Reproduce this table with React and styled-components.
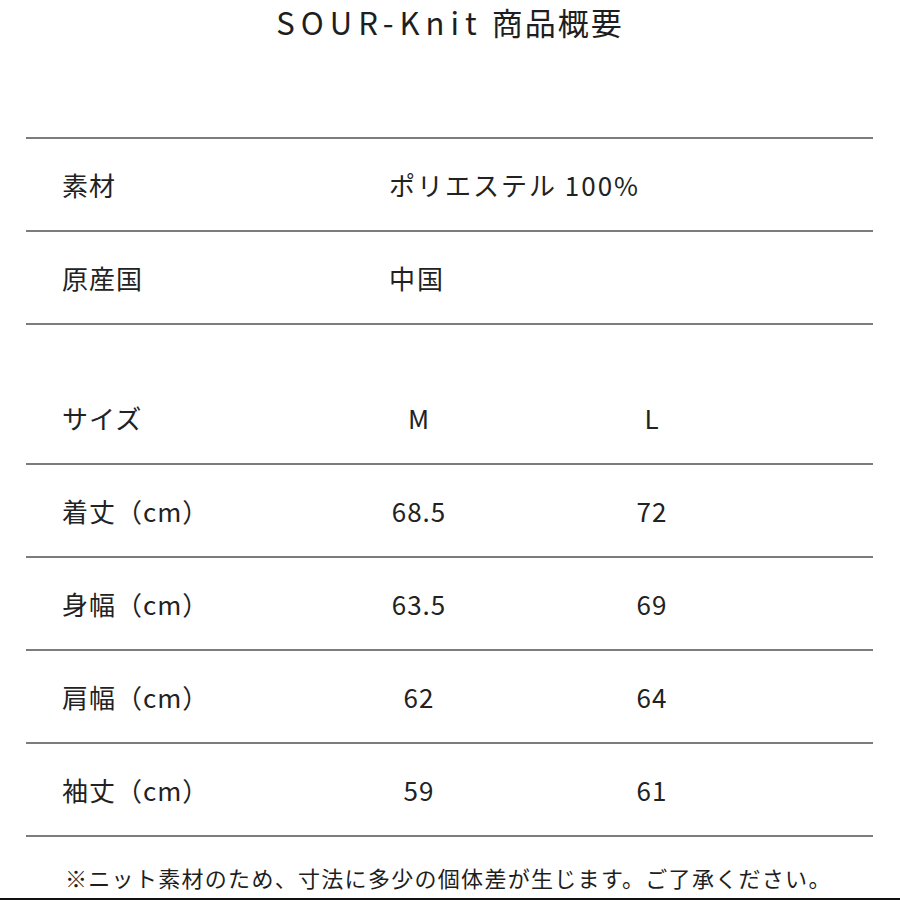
import React from 'react';
import styled, { createGlobalStyle } from 'styled-components';

const GlobalStyle = createGlobalStyle`
  html, body {
    margin: 0;
    padding: 0;
    background: #fff;
  }
  body {
    font-family: "Noto Sans CJK JP", "Noto Sans", sans-serif;
    color: #222;
  }
`

const Page = styled.div`
  width: 900px;
  height: 900px;
  display: flex;
  flex-direction: column;
  background: #fff;
`

const Title = styled.h1`
  box-sizing: border-box;
  margin: 0;
  height: 137px;
  font-size: 31px;
  font-weight: 400;
  line-height: 44px;
  text-align: center;
  letter-spacing: 2px;
  color: #1e1e1e;
`

const TitleLatin = styled.span`
  letter-spacing: 6px;
`

const Table = styled.div`
  margin: 0 27px 0 26px;
  border-top: 2px solid #7c7c7c;
`

const Row = styled.div`
  box-sizing: border-box;
  height: ${(p) => (p.$tall ? '140px' : '93px')};
  padding-top: ${(p) => (p.$tall ? '47px' : '0')};
  border-bottom: 2px solid #7c7c7c;
  display: grid;
  grid-template-columns: 363px 60px 173px 60px 1fr;
  align-items: center;
  font-size: 26px;
  letter-spacing: 1px;
`

const Label = styled.div`
  padding-left: 36px;
`

const Cell = styled.div`
  text-align: center;
  white-space: nowrap;
  justify-self: center;
`

const Wide = styled.div`
  grid-column: 2 / -1;
  letter-spacing: 2px;
`

const Note = styled.p`
  flex: 1;
  margin: 0;
  padding: 28px 0 0 65px;
  font-size: 22px;
  line-height: 24px;
  letter-spacing: 1.3px;
  color: #1e1e1e;
`

const BottomBar = styled.div`
  height: 2px;
  background: #111;
`

const sizes = [
  { label: '着丈（cm）', m: '68.5', l: '72' },
  { label: '身幅（cm）', m: '63.5', l: '69' },
  { label: '肩幅（cm）', m: '62', l: '64' },
  { label: '袖丈（cm）', m: '59', l: '61' },
]

const App = () => {
  return (
    <Page>
      <GlobalStyle />
      <Title><TitleLatin>SOUR-Knit</TitleLatin> 商品概要</Title>
      <Table>
        <Row>
          <Label>素材</Label>
          <Wide>ポリエステル 100%</Wide>
        </Row>
        <Row>
          <Label>原産国</Label>
          <Wide>中国</Wide>
        </Row>
        <Row $tall>
          <Label>サイズ</Label>
          <Cell>M</Cell>
          <span />
          <Cell>L</Cell>
        </Row>
        {sizes.map((s) => (
          <Row key={s.label}>
            <Label>{s.label}</Label>
            <Cell>{s.m}</Cell>
            <span />
            <Cell>{s.l}</Cell>
          </Row>
        ))}
      </Table>
      <Note>※ニット素材のため、寸法に多少の個体差が生じます。ご了承ください。</Note>
      <BottomBar />
    </Page>
  )
}

export default App;
